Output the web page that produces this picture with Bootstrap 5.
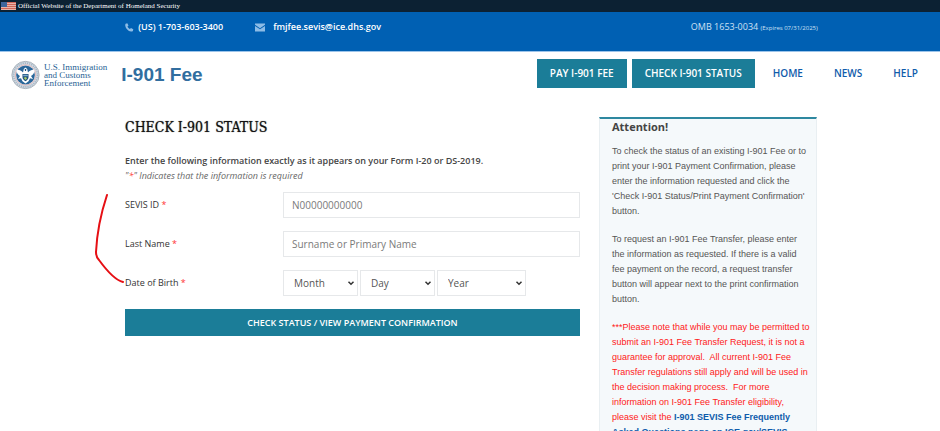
<!DOCTYPE html>
<html lang="en">
<head>
<meta charset="utf-8">
<meta name="viewport" content="width=device-width, initial-scale=1">
<title>I-901 Fee - Check I-901 Status</title>
<link rel="stylesheet" href="https://cdn.jsdelivr.net/npm/bootstrap@5.3.0/dist/css/bootstrap.min.css">
<style>
  body { font-family: "Open Sans", sans-serif; font-size: 9px; line-height: 15px; color: #444; background: #fff; }
  a { text-decoration: none; }
  .gov-bar { background: #0c2133; color: #fff; font-family: "Liberation Serif", serif; font-size: 7px; line-height: 12px; gap: 2px; }
  .contact-bar { background: #0060b3; padding: 7px 13% 15px; border-bottom: 1px solid #9cc4ea; color: #cfe1f3; }
  .contact-bar a { color: #fff; font-weight: 600; }
  .contact-bar svg { fill: #8dbce6; }
  .omb-note { font-size: 6px; }
  .contact-links { padding-left: 3px; }
  .site-nav { padding: 7px 22px 8px 11px; }
  .agency { font-family: "Liberation Serif", serif; font-size: 9px; line-height: 8px; color: #1f5f94; }
  .site-title { font-family: "Liberation Sans", sans-serif; font-size: 19px; line-height: 24px; font-weight: 700; color: #316e9f; margin-left: 14px; }
  .btn-teal { --bs-btn-color: #fff; --bs-btn-bg: #1b7d98; --bs-btn-border-color: #1b7d98; --bs-btn-hover-color: #fff; --bs-btn-hover-bg: #15677e; --bs-btn-border-radius: 0; --bs-btn-font-weight: 600; --bs-btn-font-size: 10px; --bs-btn-line-height: 15px; --bs-btn-padding-x: 12px; --bs-btn-padding-y: 6px; }
  .nav-buttons { gap: 5px; margin-right: 18px; }
  .nav-links { gap: 31px; }
  .menu-link { color: #0f5cab; font-weight: 600; font-size: 10px; }
  .page-main { display: grid; grid-template-columns: 455fr 218fr; column-gap: 19px; margin: 0 123px 0 125px; padding-top: 19px; }
  .page-heading { font-family: "Roboto Slab", "DejaVu Serif Condensed", "DejaVu Serif", serif; font-size: 14px; line-height: 18px; font-weight: 400; color: #111; text-shadow: 0 0 1px #555; margin: 0 0 17px; }
  .star { color: #f33; }
  .hint { color: #666; margin-bottom: 9px; }
  .form-line { display: grid; grid-template-columns: 158px 1fr; margin-bottom: 13px; }
  .form-line label { color: #333; padding-top: 5px; }
  .form-line .form-control, .form-line .form-select { border-radius: 0; border-color: #e6e8ea; font-size: 10px; line-height: 16px; padding: 4px 8px; color: #555; min-height: 0; }
  .form-line .form-control::placeholder { color: #7a7a7a; }
  .form-line .form-select { padding-left: 10px; background-size: 8px 8px; background-position: right 2px center;
    background-image: url("data:image/svg+xml,%3csvg xmlns='http://www.w3.org/2000/svg' viewBox='0 0 8 8'%3e%3cpath d='M1.5 2.8 4 5.2 6.5 2.8' fill='none' stroke='%23333' stroke-width='1.5'/%3e%3c/svg%3e"); }
  .birth-picks { gap: 2px; }
  .form-line .pick-short { width: 75px; }
  .form-line .pick-long { width: 89px; }
  .btn-submit { --bs-btn-font-size: 9px; --bs-btn-padding-y: 5px; --bs-btn-line-height: 15px; }
  .notice { background: #f5f9fb; border: 1px solid #e9eff2; border-top: 2px solid #2e88a0; padding: 0 4px 0 12px; font-family: "Liberation Sans", sans-serif; color: #555; margin-top: -1px; }
  .notice h2 { font-family: "Open Sans", sans-serif; font-size: 11px; line-height: 15px; font-weight: 700; color: #444; margin: 0 0 10px; }
  .notice p { margin: 0 0 13px; }
  .notice .alert-copy { color: #ff2020; }
  .notice a { color: #0f5cab; font-weight: 700; }
  .pen-mark { position: absolute; left: 92px; top: 190px; pointer-events: none; }
</style>
<script src="https://cdn.jsdelivr.net/npm/bootstrap@5.3.0/dist/js/bootstrap.bundle.min.js"></script>
</head>
<body class="position-relative">
<div class="gov-bar d-flex align-items-center">
  <svg width="16" height="12" viewBox="0 0 16 12" aria-hidden="true">
    <path fill="#e8b3a8" d="M1 2h15v8H1z"/>
    <path stroke="#cf6659" d="M1 2.5h15M1 4.5h15M1 6.5h15M1 8.5h15"/>
    <path fill="#3d659b" d="M1 2h6v5H1z"/>
  </svg>
  <span>Official Website of the Department of Homeland Security</span>
</div>

<div class="contact-bar d-flex justify-content-between">
  <div class="contact-links d-flex">
    <a class="d-flex me-4" href="tel:17036033400">
      <svg class="mt-1 me-1" width="9" height="9" viewBox="0 0 9 9" aria-hidden="true"><path d="M.6.8 2.300.2l1.200 2.200-1 1c.5 1.100 1.200 1.900 2.400 2.500l1.100-.9 2.300 1.200-.4 1.700C7.400 8.500 6.700 8.700 6 8.600 3.200 8 .8 5.500.3 2.900.1 2.100.2 1.300.6.8z"/></svg>
      (US) 1-703-603-3400</a>
    <a class="d-flex ms-2" href="mailto:fmjfee.sevis@ice.dhs.gov">
      <svg class="mt-1 me-2" width="10" height="9" viewBox="0 0 11 9" aria-hidden="true"><path d="M0 0h11v1.500L5.500 5.300 0 1.500zM0 2.800l5.500 3.700L11 2.800V9H0z"/></svg>
      fmjfee.sevis@ice.dhs.gov</a>
  </div>
  <div>OMB 1653-0034 <span class="omb-note">(Expires 07/31/2025)</span></div>
</div>

<header class="site-nav d-flex justify-content-between align-items-start">
  <a class="d-flex align-items-center" href="#">
    <svg class="me-1" width="29" height="32" viewBox="0 0 29 32" aria-hidden="true">
      <circle cx="14.500" cy="16" r="13.600" fill="#d5dce3" stroke="#a9b2bb"/>
      <circle cx="14.500" cy="16" r="11.900" fill="none" stroke="#a3b6c7" stroke-width="1.600" stroke-dasharray="1.200 1"/>
      <circle cx="14.500" cy="16" r="10.200" fill="#fff" stroke="#dda9a9" stroke-width=".8"/>
      <circle cx="14.500" cy="16" r="9.400" fill="#2a679a"/>
      <path fill="#fff" d="M5.500 11c2.500-.5 4.500.5 6.500 2.500l.8-3.500 1.700-1.500 1.700 1.500.8 3.500c2-2 4-3 6.500-2.500 0 3-1.500 5-3.500 6l2 3-3-.8-1.500 3-3 2.300-3-2.300-1.500-3-3 .8 2-3c-2-1-3.500-3-3.500-6z"/>
      <path fill="#1c4f7e" d="M11.500 15h6v3.300c0 1.800-1.500 3-3 3.900-1.500-.9-3-2.100-3-3.900zM13.700 10h1.600l-.3 2h-1z"/>
      <path fill="#7fb1cf" d="M12.200 15.700h4.600v1.600h-4.600z"/>
      <path fill="#a8d06c" d="m12.500 18.800 2.500-.7 1 1.500-1.500 1.500z"/>
    </svg>
    <span class="agency">U.S. Immigration<br>and Customs<br>Enforcement</span>
    <span class="site-title">I-901 Fee</span>
  </a>
  <nav class="d-flex align-items-center">
    <div class="nav-buttons d-flex">
      <a class="btn btn-teal" href="#">PAY I-901 FEE</a>
      <a class="btn btn-teal" href="#">CHECK I-901 STATUS</a>
    </div>
    <div class="nav-links d-flex">
      <a class="menu-link" href="#">HOME</a>
      <a class="menu-link" href="#">NEWS</a>
      <a class="menu-link" href="#">HELP</a>
    </div>
  </nav>
</header>

<main class="page-main">
  <form>
    <h1 class="page-heading">CHECK I-901 STATUS</h1>
    <div class="fw-semibold">Enter the following information exactly as it appears on your Form I-20 or DS-2019.</div>
    <div class="hint fst-italic">"<span class="star">*</span>" Indicates that the information is required</div>
    <div class="form-line">
      <label for="sevis">SEVIS ID <span class="star">*</span></label>
      <input class="form-control" id="sevis" type="text" placeholder="N00000000000">
    </div>
    <div class="form-line">
      <label for="surname">Last Name <span class="star">*</span></label>
      <input class="form-control" id="surname" type="text" placeholder="Surname or Primary Name">
    </div>
    <div class="form-line">
      <label for="month">Date of Birth <span class="star">*</span></label>
      <div class="birth-picks d-flex">
        <select class="form-select pick-short" id="month"><option>Month</option></select>
        <select class="form-select pick-short" aria-label="Day"><option>Day</option></select>
        <select class="form-select pick-long" aria-label="Year"><option>Year</option></select>
      </div>
    </div>
    <button class="btn btn-teal btn-submit w-100" type="button">CHECK STATUS / VIEW PAYMENT CONFIRMATION</button>
  </form>

  <aside class="notice">
    <h2>Attention!</h2>
    <p>To check the status of an existing I-901 Fee or to print your I-901 Payment Confirmation, please enter the information requested and click the 'Check I-901 Status/Print Payment Confirmation' button.</p>
    <p>To request an I-901 Fee Transfer, please enter the information as requested. If there is a valid fee&nbsp;payment on the record, a request transfer button will appear next to the print confirmation button.</p>
    <p class="alert-copy">***Please note that while you may be permitted to submit an I-901 Fee Transfer Request, it is not a guarantee for approval.&nbsp; All current I-901 Fee Transfer regulations still apply and will be used in the decision making process.&nbsp; For more information on I-901 Fee Transfer eligibility, please visit the <a href="#">I-901 SEVIS Fee Frequently Asked Questions page on ICE.gov/SEVIS</a></p>
  </aside>
</main>

<svg class="pen-mark" width="34" height="96" viewBox="92 190 34 96" aria-hidden="true"><path d="M107 195C101 213 97 232 96 252Q96 257 99 260C107 271 115 280 123 282" fill="none" stroke="#e60f14" stroke-width="2" stroke-linecap="round"/></svg>
</body>
</html>
